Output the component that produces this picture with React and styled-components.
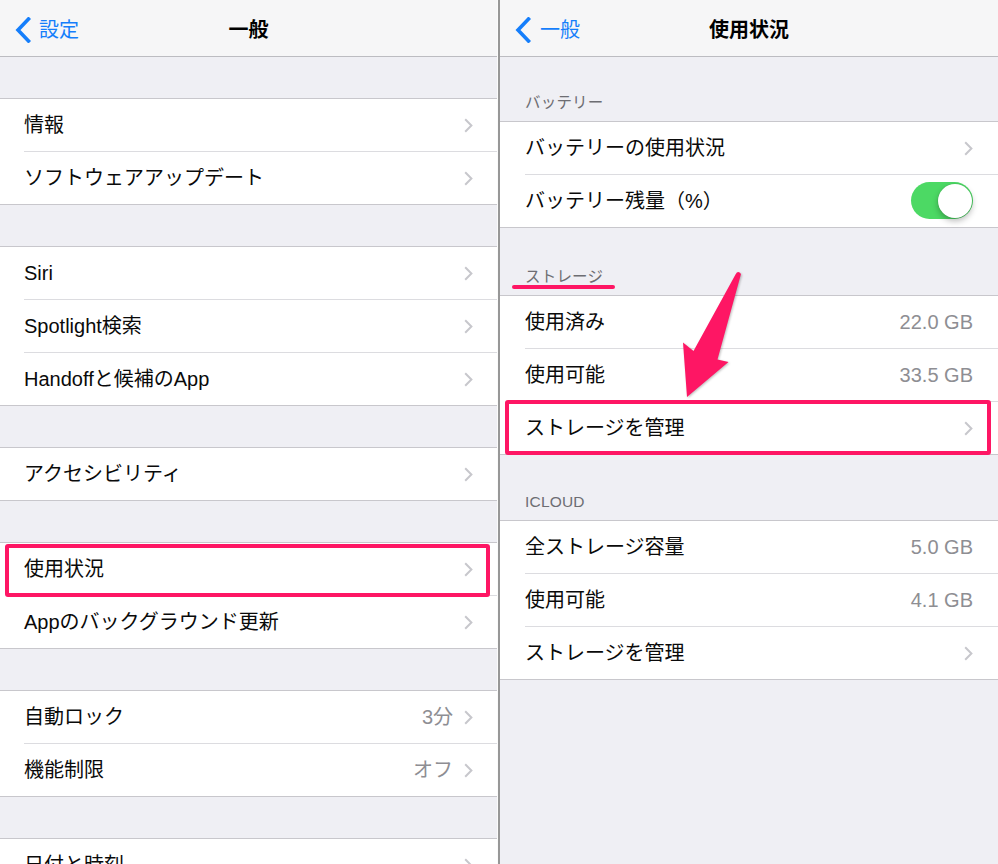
import React from 'react';
import styled, { createGlobalStyle } from 'styled-components';

const PINK = '#fe1664';
const BLUE = '#157efb';

const Global = createGlobalStyle`
  html, body { margin: 0; padding: 0; }
  body {
    width: 998px; height: 864px; overflow: hidden;
    background: #efeff4;
    font-family: "Liberation Sans", "Noto Sans CJK JP", sans-serif;
    -webkit-font-smoothing: antialiased;
  }
  * { box-sizing: border-box; }
`;

const Screen = styled.div`
  display: flex;
  width: 998px;
  height: 864px;
  overflow: hidden;
`;

const Panel = styled.div`
  position: relative;
  flex: none;
  width: ${p => p.$w}px;
  height: 864px;
  background: #efeff4;
  overflow: hidden;
  display: flex;
  flex-direction: column;
`;

const Divider = styled.div`
  flex: none;
  width: 3px;
  background: linear-gradient(to right, #fbfbfb 0 1px, #979797 1px 3px);
`;

const NavBar = styled.div`
  flex: none;
  height: 57px;
  background: #f6f6f7;
  border-bottom: 1px solid #bcbcc1;
  display: grid;
  grid-template-columns: 1fr auto 1fr;
  align-items: center;
`;

const Back = styled.div`
  display: flex;
  align-items: center;
  gap: ${p => p.$gap}px;
  padding-left: 15px;
  color: ${BLUE};
  font-size: 20px;
  line-height: 24px;
  margin-top: 3px;
`;

const Title = styled.div`
  font-size: 20px;
  font-weight: 700;
  line-height: 24px;
  color: #000;
  margin-top: 3px;
`;

const Group = styled.div`
  flex: none;
  background: #fff;
  border-top: 1px solid #c8c7cc;
  border-bottom: 1px solid #c8c7cc;
  margin-top: ${p => p.$mt || 0}px;
`;

const Row = styled.div`
  position: relative;
  padding-left: ${p => p.$pad}px;

  &::after {
    content: '';
    display: ${p => (p.$highlight ? 'block' : 'none')};
    position: absolute;
    left: 5px;
    right: 7px;
    top: ${p => p.$hlTop}px;
    bottom: ${p => p.$hlBottom}px;
    border: 4px solid ${PINK};
    border-radius: 3px;
    z-index: 2;
  }
`;

const RowInner = styled.div`
  height: ${p => (p.$last ? 52 : 53)}px;
  display: flex;
  align-items: center;
  padding-right: ${p => p.$pad}px;
  border-bottom: ${p => (p.$last ? 'none' : '1px solid #dcdce0')};
`;

const Label = styled.div`
  flex: 1;
  font-size: 20px;
  line-height: 24px;
  color: #0a0a0a;
  white-space: nowrap;
`;

const Value = styled.div`
  font-size: 20px;
  line-height: 24px;
  color: #8e8e93;
  white-space: nowrap;
`;

const ChevronBox = styled.svg`
  flex: none;
  margin-left: 11px;
  margin-top: 1px;
`;

const Toggle = styled.div`
  flex: none;
  width: 62px;
  height: 37px;
  border-radius: 19px;
  background: #4cd964;
  display: flex;
  justify-content: flex-end;
  align-items: center;
  padding: 0 1.5px;
  margin-top: -1px;
`;

const Knob = styled.div`
  width: 34px;
  height: 34px;
  border-radius: 50%;
  background: #fff;
  box-shadow: 0 3px 6px rgba(0, 0, 0, 0.28), 0 0 0 0.5px rgba(0, 0, 0, 0.08);
`;

const SectionHeader = styled.div`
  position: relative;
  flex: none;
  height: ${p => p.$h}px;
  display: flex;
  align-items: flex-end;
  padding: 0 25px 9px;
  font-size: 15.5px;
  line-height: 18px;
  color: #6d6d72;
  letter-spacing: 0.2px;
`;

const Underline = styled.div`
  position: absolute;
  left: 12px;
  width: 103px;
  bottom: 6px;
  height: 4px;
  border-radius: 2px;
  background: ${PINK};
`;

const ArrowSvg = styled.svg`
  position: absolute;
  left: 0;
  top: 0;
  pointer-events: none;
  z-index: 3;
  filter: drop-shadow(1px 1px 1px rgba(0, 0, 0, 0.25));
`;

const Chevron = () => (
  <ChevronBox width="9" height="15" viewBox="0 0 9 15">
    <path d="M1.2 1.2 L7.4 7.5 L1.2 13.8" fill="none" stroke="#c7c7cc" strokeWidth="2" />
  </ChevronBox>
);

const BackChevron = () => (
  <svg width="16" height="26" viewBox="0 0 16 26">
    <path d="M13.5 2 L3 13 L13.5 24" fill="none" stroke={BLUE} strokeWidth="3.6" strokeLinecap="square" />
  </svg>
);

const Item = ({ label, value, chevron, toggle, last, pad = 24, highlight, hlTop = 1, hlBottom = -2 }) => (
  <Row $pad={pad} $highlight={highlight} $hlTop={hlTop} $hlBottom={hlBottom}>
    <RowInner $pad={pad} $last={last}>
      <Label>{label}</Label>
      {value && <Value>{value}</Value>}
      {chevron && <Chevron />}
      {toggle && (
        <Toggle>
          <Knob />
        </Toggle>
      )}
    </RowInner>
  </Row>
);

const LeftPanel = () => (
  <Panel $w={497}>
    <NavBar>
      <Back $gap={8}>
        <BackChevron />
        <span>設定</span>
      </Back>
      <Title>一般</Title>
      <div />
    </NavBar>
    <Group $mt={41}>
      <Item label="情報" chevron />
      <Item label="ソフトウェアアップデート" chevron last />
    </Group>
    <Group $mt={41}>
      <Item label="Siri" chevron />
      <Item label="Spotlight検索" chevron />
      <Item label="Handoffと候補のApp" chevron last />
    </Group>
    <Group $mt={41}>
      <Item label="アクセシビリティ" chevron last />
    </Group>
    <Group $mt={41}>
      <Item label="使用状況" chevron highlight hlTop={1} hlBottom={-1} />
      <Item label="Appのバックグラウンド更新" chevron last />
    </Group>
    <Group $mt={41}>
      <Item label="自動ロック" value="3分" chevron />
      <Item label="機能制限" value="オフ" chevron last />
    </Group>
    <Group $mt={41}>
      <Item label="日付と時刻" chevron />
      <Item label="キーボード" chevron last />
    </Group>
  </Panel>
);

const RightPanel = () => (
  <Panel $w={498}>
    <NavBar>
      <Back $gap={9}>
        <BackChevron />
        <span>一般</span>
      </Back>
      <Title>使用状況</Title>
      <div />
    </NavBar>
    <SectionHeader $h={64}>バッテリー</SectionHeader>
    <Group>
      <Item pad={25} label="バッテリーの使用状況" chevron />
      <Item pad={25} label="バッテリー残量（%）" toggle last />
    </Group>
    <SectionHeader $h={67}>
      ストレージ
      <Underline />
    </SectionHeader>
    <Group>
      <Item pad={25} label="使用済み" value="22.0 GB" />
      <Item pad={25} label="使用可能" value="33.5 GB" />
      <Item pad={25} label="ストレージを管理" chevron last highlight hlTop={-2} hlBottom={-1} />
    </Group>
    <SectionHeader $h={65}>ICLOUD</SectionHeader>
    <Group>
      <Item pad={25} label="全ストレージ容量" value="5.0 GB" />
      <Item pad={25} label="使用可能" value="4.1 GB" />
      <Item pad={25} label="ストレージを管理" chevron last />
    </Group>
    <ArrowSvg width="498" height="864" viewBox="0 0 498 864">
      <path
        d="M235.5 274.5 Q238 270 241 274 L217.5 359.5 L228.5 362 L187 397 L183 342.5 L193.5 351 Z"
        fill={PINK}
      />
    </ArrowSvg>
  </Panel>
);

export default function App() {
  return (
    <>
      <Global />
      <Screen>
        <LeftPanel />
        <Divider />
        <RightPanel />
      </Screen>
    </>
  );
}
